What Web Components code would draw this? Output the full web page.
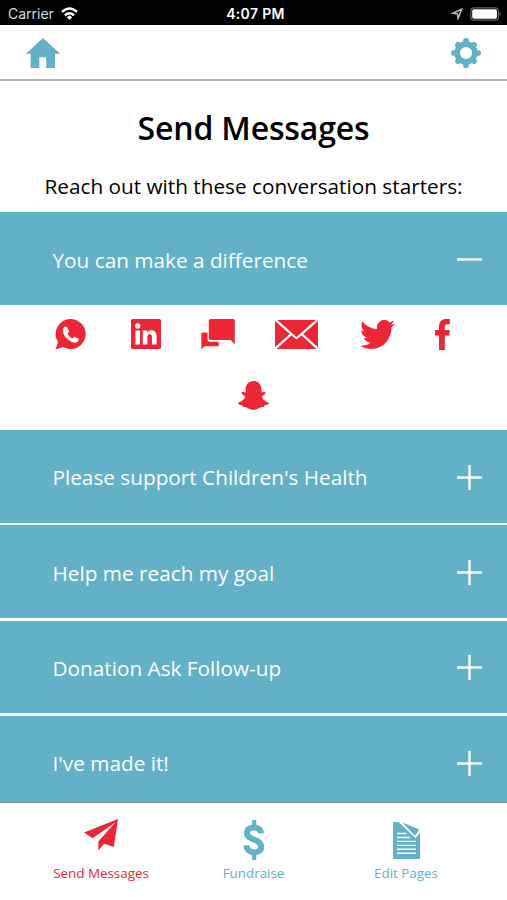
<!DOCTYPE html>
<html lang="en">
<head>
<meta charset="utf-8">
<title>Send Messages</title>
<style>
    html, body {
        margin: 0;
        height: 100%;
    }

    body {
        --blue: #62b1c6;
        --red: #ed2636;
        background: #fff;
        color: #000;
        font-family: "Open Sans", "Noto Sans", sans-serif;
        overflow: hidden;
    }
</style>
</head>
<body>

<phone-screen>
    <status-bar slot="top" carrier="Carrier" time="4:07 PM"></status-bar>
    <app-header slot="top"></app-header>

    <page-heading>
        Send Messages
        <span slot="intro">Reach out with these conversation starters:</span>
    </page-heading>

    <message-row open>
        You can make a difference
        <share-links slot="panel"></share-links>
    </message-row>
    <message-row>Please support Children's Health</message-row>
    <message-row>Help me reach my goal</message-row>
    <message-row>Donation Ask Follow-up</message-row>
    <message-row>I've made it!</message-row>

    <tab-bar slot="bottom">
        <tab-item icon="plane" active>Send Messages</tab-item>
        <tab-item icon="dollar">Fundraise</tab-item>
        <tab-item icon="page">Edit Pages</tab-item>
    </tab-bar>
</phone-screen>

<script>
// All icons live here. w and h are the drawn size in px, and also the viewBox unless one is given.
const icons = {
    home: { w: 34, h: 30, body: '<path d="M17 0 34 15.8H29V30H20.2V19.2H13.3V30H4.6V15.8H0Z"/>' },
    whatsapp: { w: 31, h: 31, body: '<path d="M16 0A15 15 0 1 1 8.2 28L.5 30.5 3 23A15 15 0 0 1 16 0Z"/><path fill="#fff" d="M10.3 7.6 12.3 8.4 14 12.2C14.1 13 12.6 14.2 12.6 14.7 13.2 16.4 15.5 18.7 17.4 19.4 18.1 19.4 19 17.7 19.8 17.7L23.7 19.7C24.2 21.5 22.2 23.4 20.4 23.6 15.4 24.3 7.6 16.7 7.7 11.6 7.8 9.8 8.8 8 10.3 7.6Z"/>' },
    linkedin: { w: 30, h: 30, body: '<rect width="30" height="30" rx="1.7"/><g fill="#fff"><circle cx="6.7" cy="7" r="2.7"/><path d="M4.4 11.5H9V25.5H4.4ZM11.8 11.5H16.2V13.5C18.5 10.2 25.6 10.2 25.6 17.3V25.5H21V18.3C21 13.8 16.4 14.1 16.4 18.3V25.5H11.8Z"/></g>' },
    chat: { w: 34, h: 31, body: '<path d="M1.6 13.4H6.5V20.2Q6.5 22.7 9 22.7H17.7V26.3Q17.7 27.2 16.8 27.2H3.4L.3 30.5V15Q.3 13.4 1.6 13.4Z"/><path d="M9.5 0H32Q33.8 0 33.8 1.8V25.6L29.7 21H9.5Q7.8 21 7.8 19.3V1.8Q7.8 0 9.5 0Z"/>' },
    mail: { w: 43, h: 29, body: '<path d="M2.3 0H40.7L21.5 17ZM0 .9 14.8 14.1 0 27.3ZM43 .9V27.3L28.2 14.1ZM16.3 15.4 21.5 19.5 26.7 15.4 41.4 29H1.6Z"/>' },
    twitter: { w: 35, h: 29, box: '0 2.2 24 19.6', body: '<path d="M23.953 4.57a10 10 0 01-2.825.775 4.958 4.958 0 002.163-2.723c-.951.555-2.005.959-3.127 1.184a4.92 4.92 0 00-8.384 4.482C7.69 8.095 4.067 6.13 1.64 3.162a4.822 4.822 0 00-.666 2.475c0 1.71.87 3.213 2.188 4.096a4.904 4.904 0 01-2.228-.616v.06a4.923 4.923 0 003.946 4.827 4.996 4.996 0 01-2.212.085 4.936 4.936 0 004.604 3.417 9.867 9.867 0 01-6.102 2.105c-.39 0-.779-.023-1.17-.067a13.995 13.995 0 007.557 2.209c9.053 0 13.998-7.496 13.998-13.985 0-.21 0-.42-.015-.63A9.935 9.935 0 0024 4.59z"/>' },
    facebook: { w: 15, h: 31, body: '<path d="M4 31V16.4H0V11H4V7.7C4 2.4 7 0 11 0H14.8V5.3H12.2C10.4 5.3 9.8 6.2 9.8 7.8V11H14.8L14.2 16.4H9.8V31Z"/>' },
    snapchat: { w: 31, h: 29, body: '<path d="M15.5 0C20.6 0 23.2 3.7 23.4 8.2V11.5L27 10.8 27.5 12.8 23.8 15.6C24.6 18.8 27.3 20.6 31 21.7L30.2 23.4 26.5 24.3 25.8 26.3C22.2 25.2 20.1 29 15.5 29 10.9 29 8.8 25.2 5.2 26.3L4.5 24.3.8 23.4 0 21.7C3.7 20.6 6.4 18.8 7.2 15.6L3.5 12.8 4 10.8 7.6 11.5V8.2C7.8 3.7 10.4 0 15.5 0Z"/>' },
    plane: { w: 34, h: 32, body: '<path d="M34 0 0 13.5 8.5 19.2 31.5 3.2 14.5 22.2 14.2 31.5 20.2 24.8 29.8 28Z"/>' },
    dollar: { w: 22, h: 40, body: '<g fill="none" stroke="currentColor" stroke-width="6"><path d="M18 13.4C17.6 5.6 4 5.6 4 12.9 4 20.8 18.2 18.2 18.2 26.8 18.2 34.6 3.6 34.4 3.5 25.4"/><path stroke-width="4" d="M11.2 0V7M11.2 33V40"/></g>' },
    page: { w: 27, h: 37, body: '<path d="M0 0H5.5L22.5 16.2 27 11V37H0Z"/><path d="M9.5.6 26.2 7.5 21.9 13.8Z"/><path fill="none" stroke="#fff" stroke-width="1.4" d="M4 11.5H13.5M4 15.5H17M4 19.4H23M4 23.4H23M4 27.3H23M4 31.2H23"/>' },
    wifi: { w: 17, h: 13, body: '<g fill="none" stroke="currentColor" stroke-width="2.4"><path d="M1 4.9Q8.5-2 16 4.9M3.9 8.4Q8.5 4.3 13.1 8.4"/></g><path d="M8.5 8.2 11.2 10.2 8.5 12.9 5.8 10.2Z"/>' },
    location: { w: 12, h: 12, body: '<path fill="none" stroke="currentColor" stroke-width="1.5" d="M10.8 1.2 1.8 5.2 6.4 5.8 7 10.4Z"/>' },
    battery: { w: 31, h: 14, body: '<rect x=".8" y=".8" width="27.6" height="12.4" rx="3.5" fill="none" stroke="#666" stroke-width="1.2"/><rect x="2.2" y="2.2" width="24.8" height="9.6" rx="2"/><path fill="#666" d="M29.5 4.5Q32 7 29.5 9.5Z"/>' },
    plus: { w: 25, h: 25, body: '<path d="M0 11.3H25V13.7H0Z"/><path d="M11.3 0H13.7V25H11.3Z"/>' },
    minus: { w: 25, h: 25, body: '<path d="M0 11.3H25V13.7H0Z"/>' }
};

// The gear is a ring with eight rounded teeth, so it is built in a loop
let teeth = '';
for (let i = 0; i < 8; i++) {
    teeth += `<rect x="12.2" y="${i % 2 ? 0.8 : 0}" width="5.6" height="8" rx="2.3" transform="rotate(${i * 45} 15 15)"/>`;
}
icons.gear = { w: 30, h: 30, body: teeth + '<circle cx="15" cy="15" r="8.9" fill="none" stroke="currentColor" stroke-width="5.6"/>' };

// Attach an open shadow root with the given markup
function render(element, html) {
    element.attachShadow({ mode: 'open' }).innerHTML = html;
}

class AppIcon extends HTMLElement {
    connectedCallback() {
        const icon = icons[this.getAttribute('name')];
        render(this, `
            <style>
                :host { display: block; flex: none; }
                svg { display: block; fill: currentColor; }
            </style>
            <svg width="${icon.w}" height="${icon.h}" viewBox="${icon.box || `0 0 ${icon.w} ${icon.h}`}" preserveAspectRatio="none">${icon.body}</svg>
        `);
    }
}

class PhoneScreen extends HTMLElement {
    connectedCallback() {
        render(this, `
            <style>
                :host { display: flex; flex-direction: column; height: 100vh; }
                main { flex: 1; min-height: 0; overflow: hidden; }
            </style>
            <slot name="top"></slot>
            <main><slot></slot></main>
            <slot name="bottom"></slot>
        `);
    }
}

class StatusBar extends HTMLElement {
    connectedCallback() {
        render(this, `
            <style>
                :host {
                    display: grid;
                    grid-template-columns: 1fr auto 1fr;
                    align-items: center;
                    box-sizing: border-box;
                    height: 25px;
                    padding: 2px 6px 0 8px;
                    background: #000;
                    color: #fff;
                    font: 14px/20px Inter, "Liberation Sans", sans-serif;
                }
                .left, .right { display: flex; align-items: center; }
                .left { gap: 7px; color: #ddd; }
                .left app-icon { color: #fff; }
                .right { justify-content: flex-end; gap: 7px; }
                .right app-icon:first-child { color: #bbb; }
                .time { padding-left: 2px; font-weight: 600; letter-spacing: .35px; }
            </style>
            <div class="left"><span>${this.getAttribute('carrier')}</span><app-icon name="wifi"></app-icon></div>
            <div class="time">${this.getAttribute('time')}</div>
            <div class="right"><app-icon name="location"></app-icon><app-icon name="battery"></app-icon></div>
        `);
    }
}

class AppHeader extends HTMLElement {
    connectedCallback() {
        render(this, `
            <style>
                :host {
                    display: flex;
                    justify-content: space-between;
                    align-items: center;
                    box-sizing: border-box;
                    height: 56px;
                    padding: 1.5px 26px 0;
                    border-bottom: 2px solid #b3b3b3;
                    color: var(--blue);
                }
            </style>
            <app-icon name="home"></app-icon>
            <app-icon name="gear"></app-icon>
        `);
    }
}

class PageHeading extends HTMLElement {
    connectedCallback() {
        render(this, `
            <style>
                :host { display: block; height: 131px; text-align: center; }
                h1 { margin: 0; padding-top: 24px; font-size: 32px; line-height: 46px; font-weight: 600; letter-spacing: -.15px; }
                p { margin: 0; padding-top: 20px; font-size: 20.75px; line-height: 30px; }
            </style>
            <h1><slot></slot></h1>
            <p><slot name="intro"></slot></p>
        `);
    }
}

class MessageRow extends HTMLElement {
    connectedCallback() {
        render(this, `
            <style>
                :host { display: block; }
                .bar {
                    display: flex;
                    justify-content: space-between;
                    align-items: center;
                    box-sizing: border-box;
                    height: 92.7px;
                    margin-bottom: 2.6px;
                    padding: 2px 25px 0 52.5px;
                    background: var(--blue);
                    color: #fff;
                    font-size: 20.75px;
                }
                :host([open]) .bar { margin-bottom: 0; padding-top: 3px; }
            </style>
            <div class="bar"><span><slot></slot></span><app-icon name="${this.hasAttribute('open') ? 'minus' : 'plus'}"></app-icon></div>
            <slot name="panel"></slot>
        `);
    }
}

class ShareLinks extends HTMLElement {
    connectedCallback() {
        render(this, `
            <style>
                :host {
                    display: flex;
                    flex-direction: column;
                    align-items: center;
                    box-sizing: border-box;
                    height: 125.3px;
                    padding-top: 14.3px;
                    gap: 31px;
                    color: var(--red);
                }
                .links { display: flex; align-items: center; gap: 40px; padding-right: 1.4px; }
                .links app-icon:nth-child(1) { margin-right: 5px; }
                .links app-icon:nth-child(4) { margin-right: 2px; }
            </style>
            <div class="links">
                <app-icon name="whatsapp"></app-icon>
                <app-icon name="linkedin"></app-icon>
                <app-icon name="chat"></app-icon>
                <app-icon name="mail"></app-icon>
                <app-icon name="twitter"></app-icon>
                <app-icon name="facebook"></app-icon>
            </div>
            <app-icon name="snapchat"></app-icon>
        `);
    }
}

class TabBar extends HTMLElement {
    connectedCallback() {
        render(this, `
            <style>
                :host {
                    display: grid;
                    grid-template-columns: repeat(3, 152.5px);
                    justify-content: center;
                    box-sizing: border-box;
                    height: 98px;
                    border-top: 1px solid #7f979d;
                    background: #fff;
                }
            </style>
            <slot></slot>
        `);
    }
}

class TabItem extends HTMLElement {
    connectedCallback() {
        render(this, `
            <style>
                :host {
                    display: flex;
                    flex-direction: column;
                    align-items: center;
                    padding-top: 16px;
                    color: var(--blue);
                    font-size: 13.4px;
                    line-height: 18px;
                }
                :host([active]) { color: var(--red); }
                .icon { display: flex; align-items: center; height: 42px; margin-bottom: 3px; }
                :host([active]) .icon { align-items: flex-start; }
            </style>
            <div class="icon"><app-icon name="${this.getAttribute('icon')}"></app-icon></div>
            <span><slot></slot></span>
        `);
    }
}

customElements.define('app-icon', AppIcon);
customElements.define('phone-screen', PhoneScreen);
customElements.define('status-bar', StatusBar);
customElements.define('app-header', AppHeader);
customElements.define('page-heading', PageHeading);
customElements.define('message-row', MessageRow);
customElements.define('share-links', ShareLinks);
customElements.define('tab-bar', TabBar);
customElements.define('tab-item', TabItem);
</script>
</body>
</html>
